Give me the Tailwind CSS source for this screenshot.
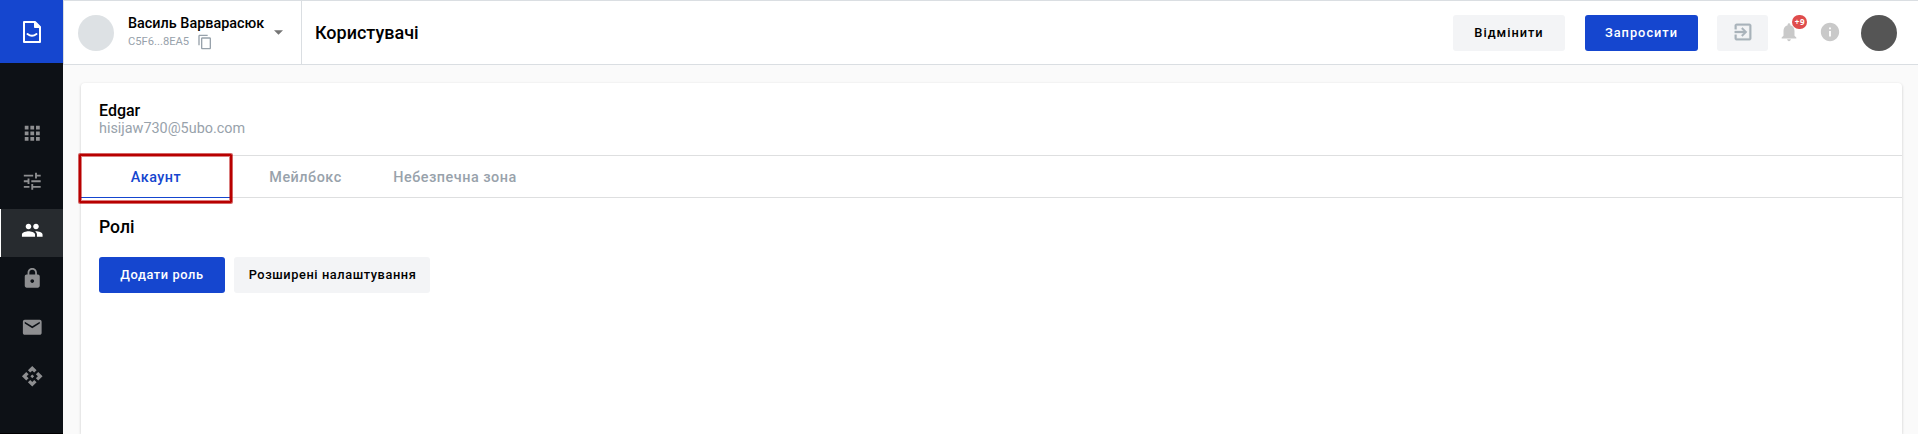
<!DOCTYPE html>
<html lang="uk">
<head>
<meta charset="utf-8">
<title>Користувачі</title>
<script src="https://cdn.jsdelivr.net/npm/@tailwindcss/browser@4"></script>
</head>
<body class="h-[434px] w-[1918px] overflow-hidden bg-[#fafafa] font-['Roboto','Liberation_Sans',sans-serif] text-black">
<div class="flex h-full">
  <aside class="flex w-[63px] shrink-0 flex-col border-b border-black bg-[#0d1116] text-[#8e8f91]">
    <a class="flex h-[63px] items-center justify-center bg-[#1546cf] pt-px pl-px">
      <svg class="h-[22px] w-[18px]" viewBox="0 0 18 22" fill="none" stroke="#fff" stroke-width="2" stroke-linejoin="round"><path d="M1 1H12L17 6V21H1Z"/><path d="M11.500 1V6.500H17" fill="#fff" stroke-width="1"/><path d="M4.500 13Q9 16.500 13.500 13" stroke-linecap="round"/></svg>
    </a>
    <nav class="flex flex-col gap-[0.6px] pt-[49px]">
      <a class="flex h-12 justify-center pt-[10px] pl-[2px]"><svg class="size-[22.5px]" viewBox="0 0 24 24" fill="currentColor"><path d="M4 8h4V4H4v4zm6 12h4v-4h-4v4zm-6 0h4v-4H4v4zm0-6h4v-4H4v4zm6 0h4v-4h-4v4zm6-10v4h4V4h-4zm-6 4h4V4h-4v4zm6 6h4v-4h-4v4zm0 6h4v-4h-4v4z"/></svg></a>
      <a class="flex h-12 justify-center pt-[9px] pl-[2px]"><svg class="size-[22.5px]" viewBox="0 0 24 24" fill="currentColor"><path d="M3 17v2h6v-2H3zM3 5v2h10V5H3zm10 16v-2h8v-2h-8v-2h-2v6h2zM7 9v2H3v2h4v2h2V9H7zm14 4v-2H11v2h10zm-6-4h2V7h4V5h-4V3h-2v6z"/></svg></a>
      <a class="flex h-12 justify-center border-l border-white bg-[#272b2f] pt-[10px] pl-px text-white"><svg class="size-[22.5px]" viewBox="0 0 24 24" fill="currentColor"><path d="M16 11c1.660 0 2.990-1.340 2.990-3S17.660 5 16 5c-1.660 0-3 1.340-3 3s1.340 3 3 3zm-8 0c1.660 0 2.990-1.340 2.990-3S9.660 5 8 5C6.340 5 5 6.340 5 8s1.340 3 3 3zm0 2c-2.330 0-7 1.170-7 3.500V19h14v-2.500c0-2.330-4.670-3.500-7-3.500zm8 0c-.29 0-.62.02-.97.05 1.160.84 1.970 1.970 1.970 3.450V19h6v-2.500c0-2.330-4.670-3.500-7-3.500z"/></svg></a>
      <a class="flex h-12 justify-center pt-[9px] pl-[2px]"><svg class="size-[22.5px]" viewBox="0 0 24 24" fill="currentColor"><path d="M18 8h-1V6c0-2.760-2.240-5-5-5S7 3.240 7 6v2H6c-1.100 0-2 .9-2 2v10c0 1.100.9 2 2 2h12c1.100 0 2-.9 2-2V10c0-1.100-.9-2-2-2zm-6 9c-1.100 0-2-.9-2-2s.9-2 2-2 2 .9 2 2-.9 2-2 2zm3.100-9H8.900V6c0-1.710 1.390-3.100 3.100-3.100s3.100 1.390 3.100 3.100v2z"/></svg></a>
      <a class="flex h-12 justify-center pt-[10px] pl-[2px]"><svg class="size-[22.5px]" viewBox="0 0 24 24" fill="currentColor"><path d="M20 4H4c-1.100 0-1.990.9-1.990 2L2 18c0 1.100.9 2 2 2h16c1.100 0 2-.9 2-2V6c0-1.100-.9-2-2-2zm0 4l-8 5-8-5V6l8 5 8-5v2z"/></svg></a>
      <a class="flex h-12 justify-center pt-[10px] pl-[2px]"><svg class="size-[22.5px]" viewBox="0 0 24 24" fill="currentColor"><path d="M14 12l-2 2-2-2 2-2 2 2zm-2-6l2.120 2.120 2.500-2.500L12 1 7.380 5.620l2.500 2.500L12 6zm-6 6l2.120-2.120-2.500-2.500L1 12l4.620 4.620 2.500-2.500L6 12zm12 0l-2.120 2.120 2.500 2.500L23 12l-4.620-4.620-2.500 2.500L18 12zm-6 6l-2.120-2.120-2.500 2.500L12 23l4.620-4.620-2.500-2.500L12 18z"/></svg></a>
    </nav>
  </aside>
  <div class="flex min-w-0 flex-1 flex-col">
    <header class="flex h-[65px] shrink-0 items-center border-y border-l border-[#dadee2] bg-white pr-[21px]">
      <div class="flex h-full w-[238px] shrink-0 items-center border-r border-[#dadee2] pl-[14px]">
        <div class="mt-px size-9 rounded-full bg-[#dde1e4]"></div>
        <div class="ml-[14px] w-[137px] whitespace-nowrap">
          <div class="text-[14.4px] leading-[18px] font-medium">Василь Варварасюк</div>
          <div class="flex h-[18px] items-center text-[11.2px] text-[#98a2ab]"><span class="w-[69px] pt-px">C5F6...8EA5</span><svg class="mt-[1px] size-4" viewBox="0 0 24 24" fill="currentColor"><path d="M16 1H4c-1.100 0-2 .9-2 2v14h2V3h12V1zm3 4H8c-1.100 0-2 .9-2 2v14c0 1.100.9 2 2 2h11c1.100 0 2-.9 2-2V7c0-1.100-.9-2-2-2zm0 16H8V7h11v14z"/></svg></div>
        </div>
        <svg class="ml-[9px] h-[5px] w-[9px]" viewBox="0 0 10 5"><path d="M0 0H10L5 5Z" fill="#757575"/></svg>
      </div>
      <h1 class="ml-[13px] flex-1 text-[18px] leading-6 font-medium">Користувачі</h1>
      <div class="flex items-center pt-px">
        <button class="h-9 w-28 rounded-[3px] bg-[#f3f4f6] text-[12.8px] font-medium tracking-[1px]">Відмінити</button>
        <button class="ml-5 h-9 w-[113px] rounded-[3px] bg-[#1546cf] text-[12.8px] font-medium tracking-[1px] text-white">Запросити</button>
        <button class="ml-[19px] flex h-9 w-[51px] items-center justify-center rounded-[3px] bg-[#f3f4f6]"><svg class="-mt-[2px] size-[22px]" viewBox="0 0 24 24" fill="#a9b3bb" stroke="#a9b3bb" stroke-width=".4"><path d="M10.090 15.590L11.500 17l5-5-5-5-1.410 1.410L12.670 11H3v2h9.670l-2.580 2.590zM19 3H5c-1.110 0-2 .9-2 2v4h2V5h14v14H5v-4H3v4c0 1.100.89 2 2 2h14c1.100 0 2-.9 2-2V5c0-1.100-.9-2-2-2z"/></svg></button>
        <div class="relative ml-[10px] size-[22px] text-[#c9c9c9]"><svg class="-mt-px size-[22px]" viewBox="0 0 24 24" fill="currentColor"><path d="M12 22c1.100 0 2-.9 2-2h-4c0 1.100.89 2 2 2zm6-6v-5c0-3.070-1.640-5.640-4.500-6.320V4c0-.83-.67-1.500-1.500-1.500s-1.500.67-1.500 1.500v.68C7.630 5.360 6 7.920 6 11v5l-2 2v1h16v-1l-2-2z"/></svg>
          <span class="absolute top-[-7px] left-[14px] flex h-[14px] w-[15px] items-center justify-center rounded-full bg-[#df4c4c] pl-px font-['Open_Sans',sans-serif] text-[8px] leading-none font-bold tracking-[0.6px] text-white">+9</span></div>
        <svg class="-mt-[2px] ml-[19px] size-[22px]" viewBox="0 0 24 24" fill="#c9c9c9"><path d="M12 2C6.480 2 2 6.480 2 12s4.480 10 10 10 10-4.480 10-10S17.520 2 12 2zm1 15h-2v-6h2v6zm0-8h-2V7h2v2z"/></svg>
        <div class="ml-5 size-9 rounded-full bg-[#555]"></div>
      </div>
    </header>
    <main class="mt-[18px] mr-4 ml-[18px] min-h-0 flex-1 rounded-t-[4px] bg-white shadow-[0_1px_3px_rgba(0,0,0,0.2)]">
      <div class="h-[72px] pt-[18px] pl-[18px]">
        <div class="text-[16px] leading-[19px] font-medium">Edgar</div>
        <div class="text-[14.4px] leading-[17px] text-[#98a2ab]">hisijaw730@5ubo.com</div>
      </div>
      <div class="relative flex h-[43px] border-y border-[#dedfe0] text-[14.4px] font-medium tracking-[0.5px] text-[#98a2ab]">
        <div class="flex h-[42px] w-[149px] items-center justify-center border-b border-[#1546cf] pt-[2px] pl-px text-[#1546cf]">Акаунт</div>
        <div class="flex h-[41px] w-[150px] items-center justify-center pt-[2px] pl-px">Мейлбокс</div>
        <div class="flex h-[41px] w-[149px] items-center justify-center pt-[2px] pl-px whitespace-nowrap">Небезпечна зона</div>
        <div class="absolute top-[-2px] left-[-2px] h-[49px] w-[153px] rounded-[1px] border-2 border-[#b80000] shadow-[0_0_0_1px_rgba(184,0,0,0.6),inset_0_0_0_1px_rgba(184,0,0,0.5)]"></div>
      </div>
      <div class="pt-[17px] pl-[18px]">
        <h2 class="text-[17.6px] leading-6 font-medium">Ролі</h2>
        <div class="mt-[18px] flex gap-[9px]">
          <button class="h-9 w-[126px] rounded-[3px] bg-[#1546cf] text-[12.8px] font-medium tracking-[0.6px] text-white">Додати роль</button>
          <button class="h-9 w-[196px] rounded-[3px] bg-[#f3f4f6] pl-px text-[12.8px] font-medium tracking-[0.58px] whitespace-nowrap">Розширені налаштування</button>
        </div>
      </div>
    </main>
  </div>
</div>
</body>
</html>
